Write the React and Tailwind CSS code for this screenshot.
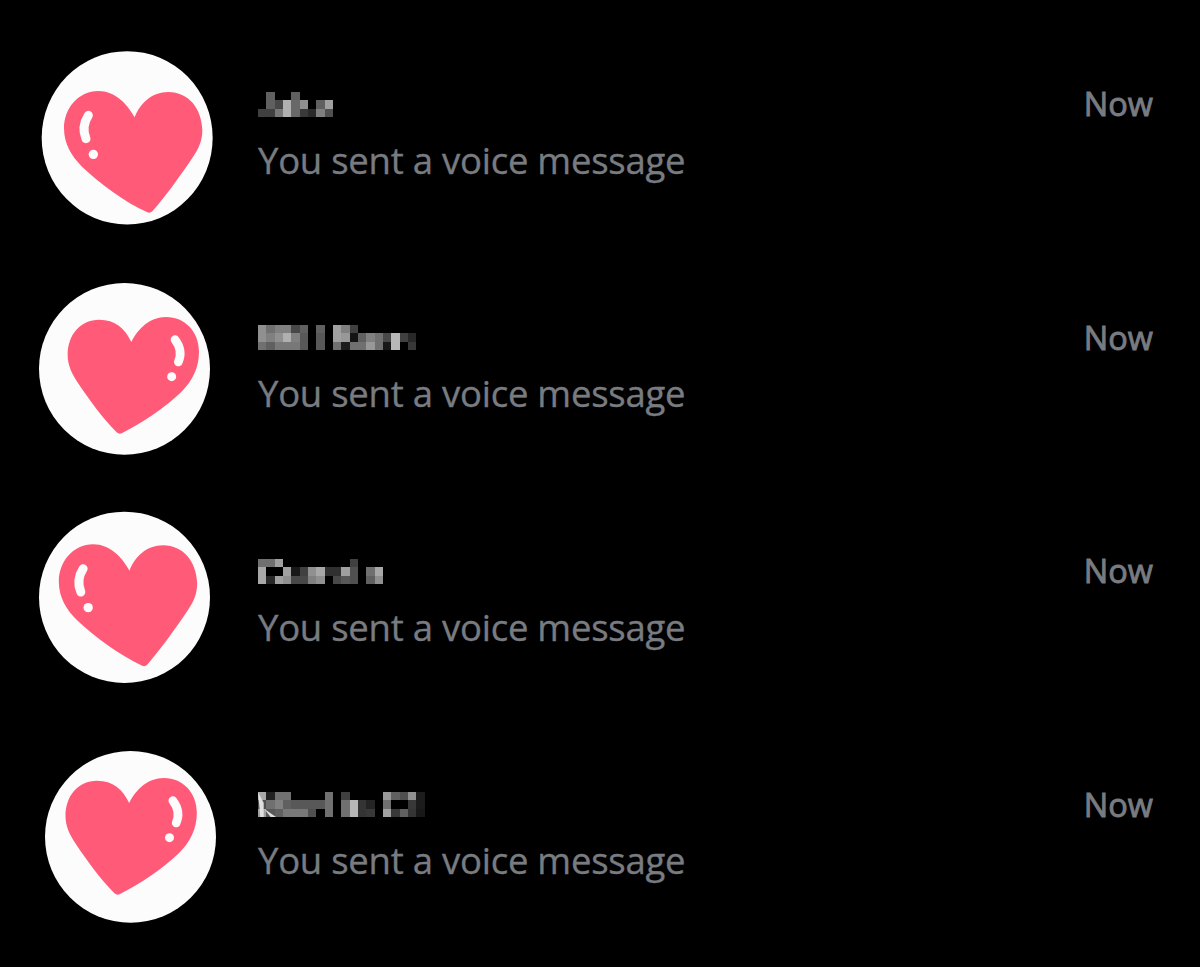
const HEART_LEFT =
  'M314 232 C290 190 255 153 205 153 C145 153 102 205 102 265 C102 312 125 349 156 380 C212 433 282 484 352 517 Q360 521 367 514 C405 472 450 408 487 354 C506 326 517 303 517 270 C515 205 475 156 415 156 C365 156 330 190 314 232Z'
const HEART_RIGHT =
  'M304 216 C285 175 255 149 208 149 C150 149 113 195 113 255 C113 285 125 311 144 339 C178 390 218 444 260 487 Q267 494 275 490 C340 457 401 416 453 367 C486 333 507 295 507 245 C507 185 465 141 408 141 C360 141 325 175 304 216Z'

// Blurred-out names: three rows of grey levels, '--' is an empty cell
const chats = [
  {
    avatar: { cx: 291.5, cy: 293.5, rx: 256.5, ry: 260, shine: 'left', dx: 0, dy: 0 },
    offset: 'mt-[40px]',
    name: [
      '-- 60 -- -- 60 -- -- -- --',
      '-- 60 48 b0 68 90 -- 60 a0',
      '40 40 78 b0 68 3a 2a 80 50',
    ],
  },
  {
    avatar: { cx: 283.5, cy: 296.5, rx: 256.5, ry: 257.5, shine: 'right', dx: 0, dy: 0 },
    offset: 'mt-[36.5px]',
    name: [
      '90 70 80 80 48 60 -- 60 -- a0 80 40 -- -- -- -- -- -- --',
      '90 80 90 b0 80 58 -- 58 -- a0 98 14 60 80 70 48 b8 40 28',
      '70 60 78 78 78 58 -- 58 -- 70 1c 70 70 98 70 18 b8 -- 38',
    ],
  },
  {
    avatar: { cx: 283.5, cy: 292, rx: 256.5, ry: 257, shine: 'left', dx: -15.5, dy: -20 },
    offset: 'mt-[33px]',
    name: [
      '70 70 a0 -- -- -- -- -- -- -- -- 40 -- -- --',
      'a8 -- -- a0 18 40 90 a8 30 30 a0 50 -- 70 a8',
      'a8 28 a0 90 48 48 80 90 -- 48 58 50 -- 60 90',
    ],
  },
  {
    avatar: { cx: 301.5, cy: 290.5, rx: 256.5, ry: 257.5, shine: 'right', dx: -6.5, dy: -27 },
    offset: 'mt-[39.5px]',
    name: [
      'a8 20 70 70 -- -- -- -- 70 -- 40 -- -- -- -- 98 60 50 90 1c',
      '50 70 80 60 58 58 58 58 70 -- 70 b8 34 24 -- 70 -- -- 38 1c',
      'a0 58 60 78 78 78 50 -- 70 -- 70 b8 34 38 -- a0 38 60 34 18',
    ],
    glint: true,
  },
]

function Avatar({ cx, cy, rx, ry, shine, dx, dy }) {
  return (
    <svg viewBox="0 0 600 600" className="h-[200px] w-[200px]">
      <ellipse cx={cx} cy={cy} rx={rx} ry={ry} fill="#fcfcfc" />
      <g transform={`translate(${dx} ${dy})`}>
        <path d={shine === 'left' ? HEART_LEFT : HEART_RIGHT} fill="#ff5a78" />
        {shine === 'left' ? (
          <>
            <path d="M175 226 Q153 260 168 296" fill="none" stroke="#fcfcfc" strokeWidth="27" strokeLinecap="round" />
            <circle cx="190" cy="343" r="14" fill="#fcfcfc" />
          </>
        ) : (
          <>
            <path d="M435 209 Q460 242 445 276" fill="none" stroke="#fcfcfc" strokeWidth="26" strokeLinecap="round" />
            <circle cx="425" cy="320" r="13.5" fill="#fcfcfc" />
          </>
        )}
      </g>
    </svg>
  )
}

function HiddenName({ rows, glint }) {
  return (
    <svg viewBox="0 0 600 75" className="h-[25px] w-[200px]">
      <g shapeRendering="crispEdges">
        {rows.map((row, y) =>
          row.split(' ').map((v, x) =>
            v === '--' ? null : (
              <rect key={`${x}-${y}`} x={x * 25} y={y * 25} width="25" height="25" fill={`#${v}${v}${v}`} />
            )
          )
        )}
      </g>
      {glint && (
        <>
          <path d="M0 0 L7 75 H17 V32Z" fill="#e0e0e0" />
          <path d="M18 50 L54 75 H38Z" fill="#e0e0e0" />
        </>
      )}
    </svg>
  )
}

function ChatRow({ chat }) {
  return (
    <li className="flex h-[233.5px] items-start pl-[30px] pr-[47px]">
      <div className={`w-[228px] shrink-0 ${chat.offset}`}>
        <Avatar {...chat.avatar} />
      </div>
      <div className="flex flex-1 flex-col pt-[91.7px]">
        <HiddenName rows={chat.name} glint={chat.glint} />
        <p className="mt-[18.3px] whitespace-nowrap text-[36.5px] leading-[50px] tracking-[-0.25px] [-webkit-text-stroke:0.35px_#787c81]">
          You sent a voice message
        </p>
      </div>
      <span className="pt-[80px] text-[32.5px] leading-[48px] [-webkit-text-stroke:0.9px_#787c81]">Now</span>
    </li>
  )
}

export default function App() {
  return (
    <main className="h-[967px] w-[1200px] overflow-hidden bg-black font-['Open_Sans',sans-serif] text-[#787c81]">
      <ul>
        {chats.map((chat, i) => (
          <ChatRow key={i} chat={chat} />
        ))}
      </ul>
    </main>
  )
}
